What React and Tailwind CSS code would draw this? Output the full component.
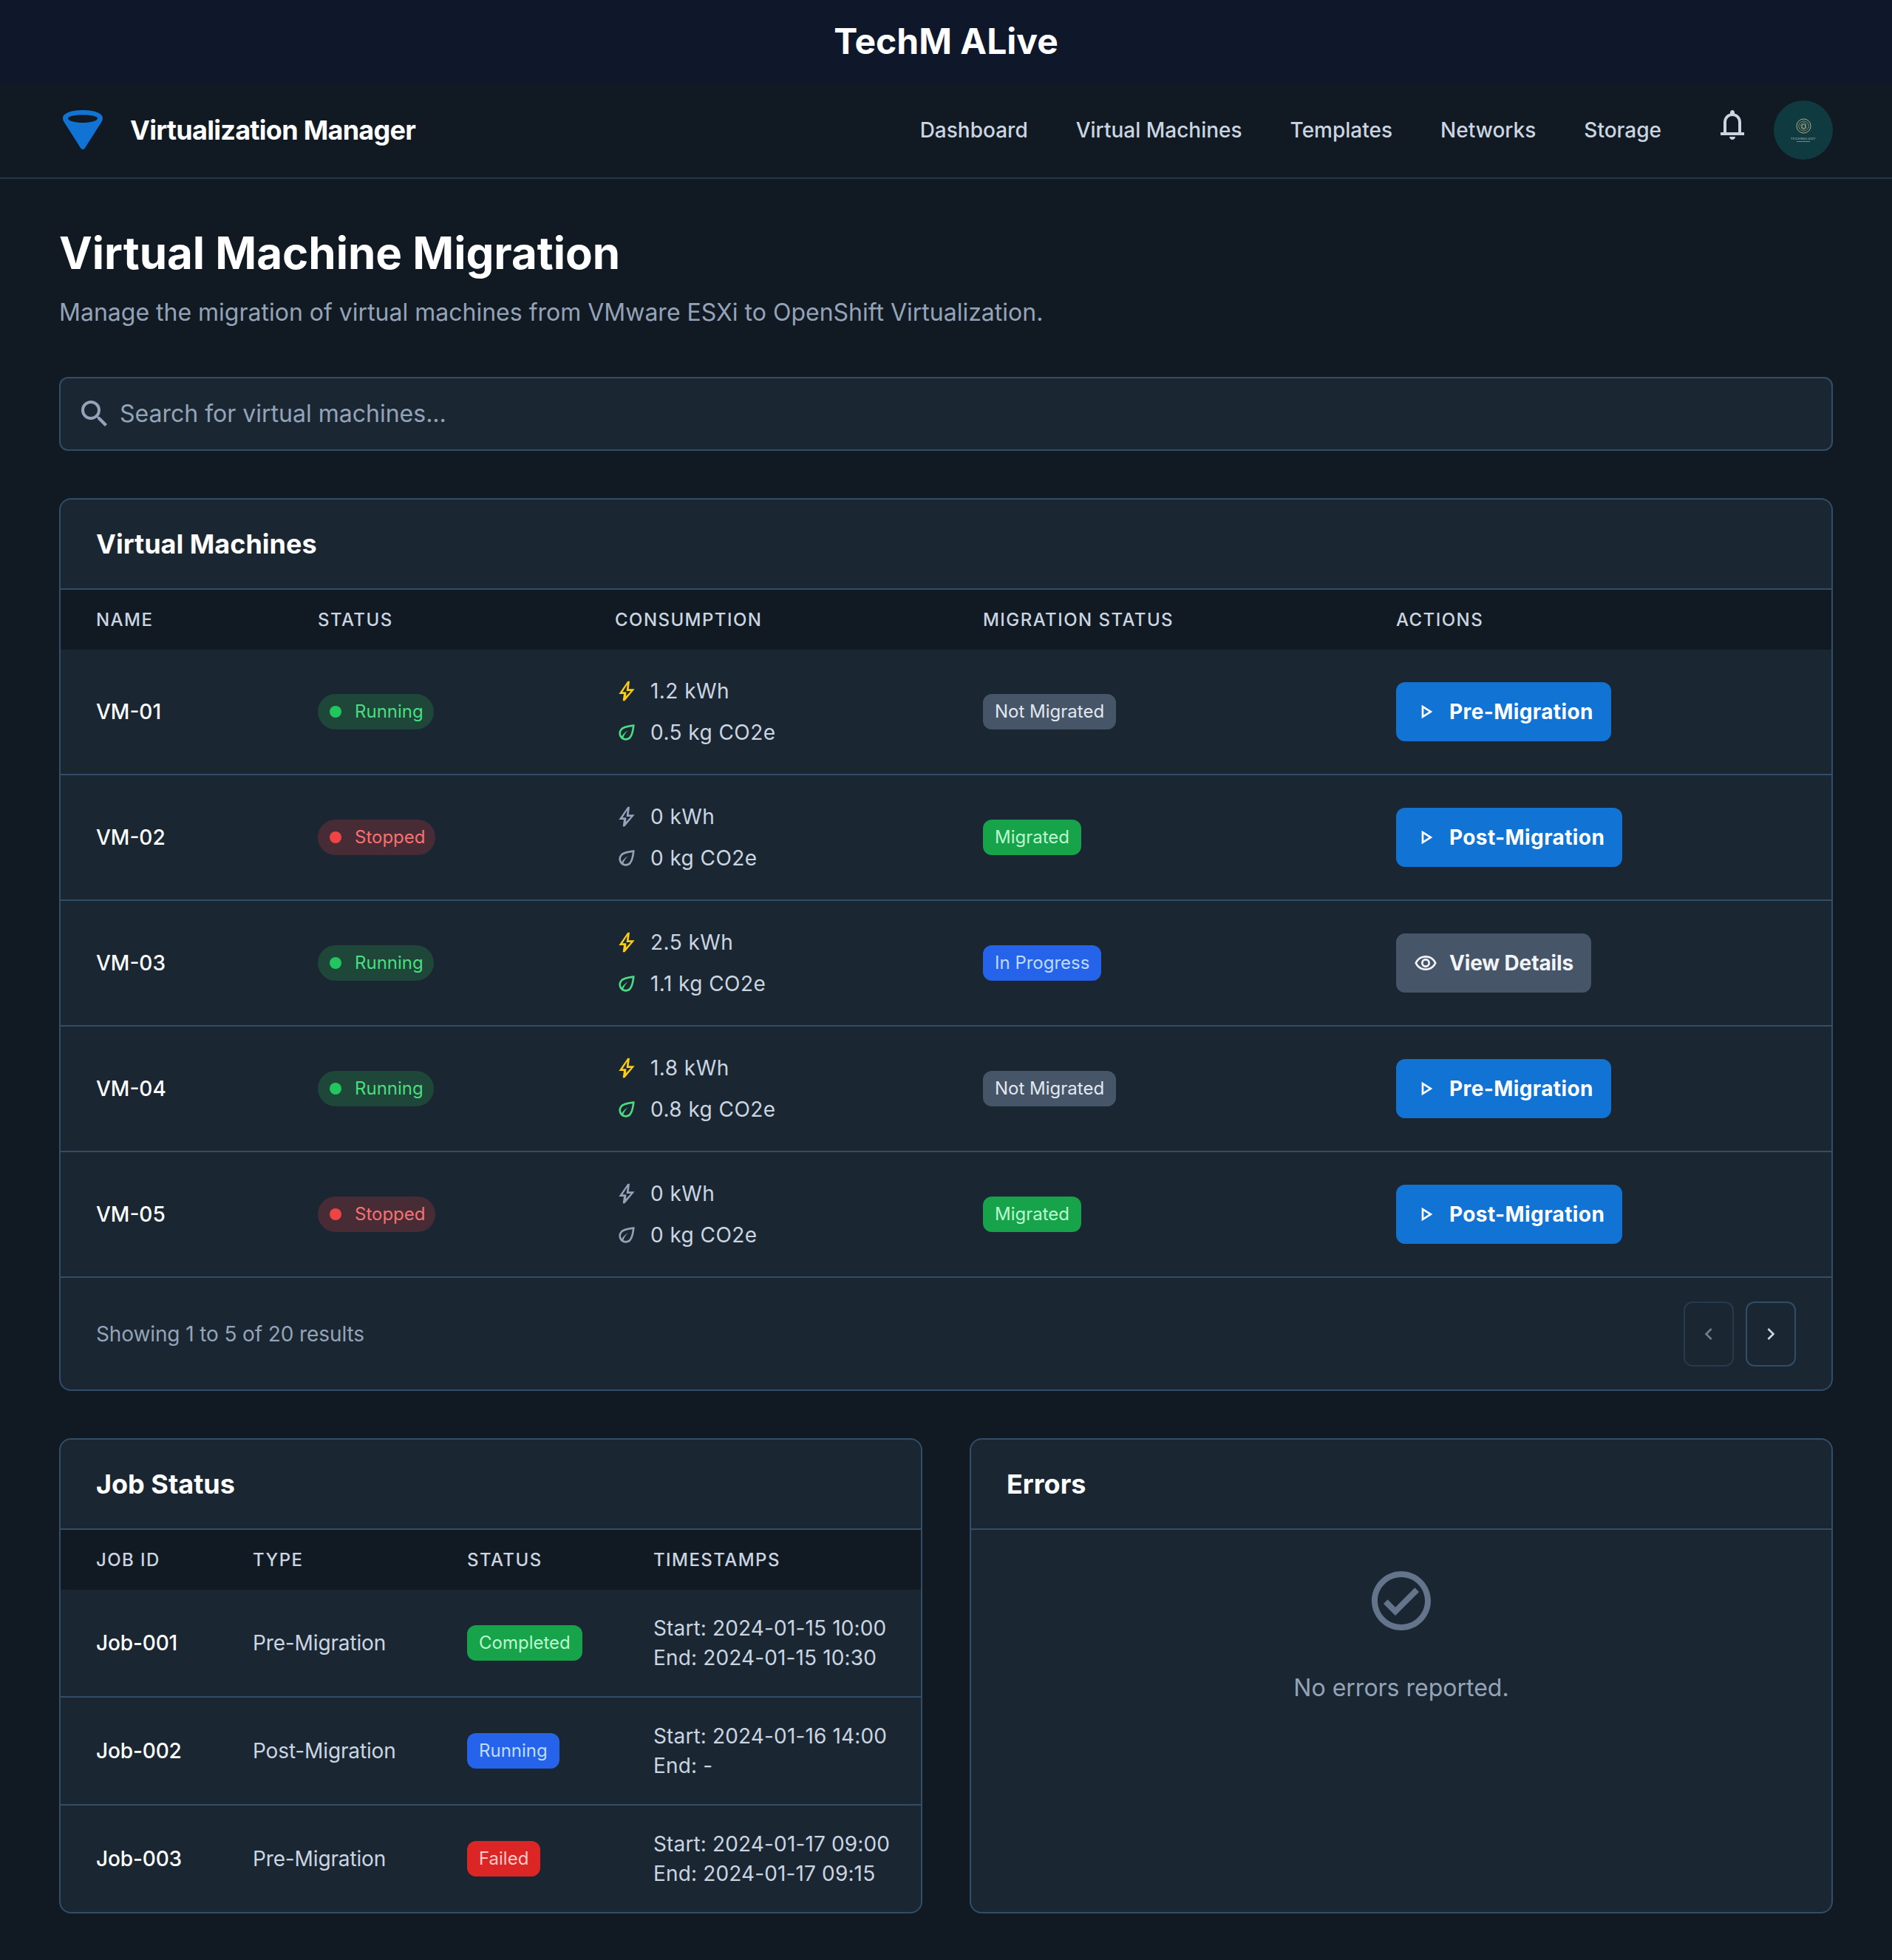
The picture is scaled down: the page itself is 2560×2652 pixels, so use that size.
import React from "react";
import { MdSearch, MdOutlinePlayArrow, MdOutlineRemoveRedEye, MdOutlineEco, MdOutlineCheckCircle, MdChevronLeft, MdChevronRight } from "react-icons/md";

const vms = [
  { n: "VM-01", s: "Running", k: "1.2 kWh", c: "0.5 kg CO2e", m: "Not Migrated", a: "Pre-Migration" },
  { n: "VM-02", s: "Stopped", k: "0 kWh", c: "0 kg CO2e", m: "Migrated", a: "Post-Migration" },
  { n: "VM-03", s: "Running", k: "2.5 kWh", c: "1.1 kg CO2e", m: "In Progress", a: "View Details" },
  { n: "VM-04", s: "Running", k: "1.8 kWh", c: "0.8 kg CO2e", m: "Not Migrated", a: "Pre-Migration" },
  { n: "VM-05", s: "Stopped", k: "0 kWh", c: "0 kg CO2e", m: "Migrated", a: "Post-Migration" },
];

const jobs = [
  { id: "Job-001", t: "Pre-Migration", s: "Completed", a: "Start: 2024-01-15 10:00", b: "End: 2024-01-15 10:30" },
  { id: "Job-002", t: "Post-Migration", s: "Running", a: "Start: 2024-01-16 14:00", b: "End: -" },
  { id: "Job-003", t: "Pre-Migration", s: "Failed", a: "Start: 2024-01-17 09:00", b: "End: 2024-01-17 09:15" },
];

const tag = {
  "Not Migrated": "bg-[#475569] text-[#e2e8f0]",
  Migrated: "bg-[#16a34a] text-[#bbf7d0]",
  "In Progress": "bg-[#2563eb] text-[#bfdbfe]",
  Completed: "bg-[#16a34a] text-[#bbf7d0]",
  Running: "bg-[#2563eb] text-[#bfdbfe]",
  Failed: "bg-[#dc2626] text-[#fecaca]",
};

function Tag({ v }) {
  return <span className={`inline-flex items-center h-12 px-4 rounded-xl text-[24px] font-normal ${tag[v]}`}>{v}</span>;
}

function Status({ v }) {
  const run = v === "Running";
  return (
    <span className={`inline-flex items-center h-12 pl-4 pr-3.5 gap-[18px] rounded-full text-[24px] font-normal ${run ? "bg-[#1e4639] text-[#4ade80]" : "bg-[#472c36] text-[#f87171]"}`}>
      <span className={`w-4 h-4 rounded-full ${run ? "bg-[#22c55e]" : "bg-[#ef4444]"}`} />
      {v}
    </span>
  );
}

function Action({ v }) {
  const view = v === "View Details";
  return (
    <button className={`inline-flex items-center h-20 px-6 gap-4 rounded-xl text-[28px] font-bold ${view ? "bg-[#475569] text-[#f1f5f9] tracking-[-0.005em]" : "bg-[#1173d4] text-white tracking-[0.014em]"}`}>
      {view ? <MdOutlineRemoveRedEye className="w-8 h-8" /> : <MdOutlinePlayArrow className="w-8 h-8" />}
      {v}
    </button>
  );
}

function Bell() {
  return (
    <svg viewBox="0 0 24 24" fill="#cbd5e1" className="ml-[72px] w-12 h-12 -mt-3.5 shrink-0">
      <path d="M4 19v-2h2v-7q0-2.075 1.25-3.687T10.5 4.2v-.7q0-.625.438-1.062T12 2q.625 0 1.063.438T13.500 3.500v.7q2 .5 3.250 2.113T18 10v7h2v2H4Zm8 3q-.825 0-1.413-.588T10 20h4q0 .825-.588 1.413T12 22Zm-4-5h8v-7q0-1.650-1.175-2.825T12 6q-1.650 0-2.825 1.175T8 10v7Z" />
    </svg>
  );
}

function Bolt({ className }) {
  return (
    <svg viewBox="0 0 24 24" fill="currentColor" className={className}>
      <path fillRule="evenodd" d="M8 22l1-7H4l9-13h2l-1 8h6L10 22H8z M11.300 17.300 16.200 12h-4.500l.8-6.500L7.800 13h3.700l-.2 4.300z" />
    </svg>
  );
}

function Logo() {
  return (
    <svg viewBox="0 0 54 54" className="w-[54px] h-[54px] shrink-0">
      <path fillRule="evenodd" fill="#1173d4" d="M27 0C13 0 0 3.500 0 11 C0 12.500 .5 13.800 1.200 15.200 L24.200 51.500 C25.500 53.500 28.500 53.500 29.800 51.500 L52.800 15.200 C53.500 13.800 54 12.500 54 11 C54 3.500 41 0 27 0 Z M27 6.500 C38 6.500 47 8.500 47 11 C47 14.500 38 17 27 17 C16 17 7 14.500 7 11 C7 8.500 16 6.500 27 6.500 Z" />
    </svg>
  );
}

function Avatar() {
  return (
    <div className="w-20 h-20 rounded-full bg-[#0f3a40] ml-8 flex flex-col items-center justify-center shrink-0">
      <svg viewBox="0 0 22 22" className="w-[21px] h-[21px]" fill="none" stroke="#b9b48f" strokeWidth="1">
        <circle cx="11" cy="11" r="10" />
        <circle cx="11" cy="11" r="7" strokeOpacity=".7" />
        <path d="M7 9l4-3 3 2v6l-3 2-3-2z M9 9h4v5H9z" strokeWidth=".8" />
      </svg>
      <span className="text-[4px] leading-[5px] mt-[4px] text-[#c8cfc8] tracking-[0.15em]">TECHNOLOGY</span>
      <span className="w-[18px] h-px mt-[1px] bg-[#6f8a88]" />
    </div>
  );
}

const Card = ({ title, children, className = "" }) => (
  <section className={`bg-[#1a2733] border-2 border-[#314d68] rounded-2xl overflow-hidden ${className}`}>
    <h2 className="h-[120px] flex items-center px-12 text-[36px] font-bold text-white">{title}</h2>
    {children}
  </section>
);

const vmCols = "grid grid-cols-[300px_402px_498px_559px_1fr] px-12";
const jobCols = "grid grid-cols-[212px_290px_252px_1fr] px-12";
const Th = ({ children }) => <div className="text-[24px] font-medium tracking-[0.06em] text-[#cbd5e1] uppercase">{children}</div>;

export default function App() {
  return (
    <div className="h-[2652px] overflow-hidden bg-[#111a22] font-['Inter','Liberation_Sans',sans-serif] text-white">
      <div className="h-[112px] bg-[#0f172a] flex items-center justify-center text-[48px] font-bold">TechM ALive</div>
      <header className="h-[130px] border-b-2 border-[#233648] pl-[85px] pr-20 flex items-center">
        <Logo />
        <div className="ml-[37px] text-[36px] font-bold tracking-[-0.02em] flex-1">Virtualization Manager</div>
        <nav className="flex items-center gap-[65px] text-[28px] font-medium text-[#cbd5e1]">
          <a>Dashboard</a><a>Virtual Machines</a><a>Templates</a><a>Networks</a><a>Storage</a>
        </nav>
        <Bell />
        <Avatar />
      </header>
      <main className="px-20 pt-[64px]">
        <h1 className="text-[60px] leading-[72px] font-bold">Virtual Machine Migration</h1>
        <p className="mt-[21px] text-[32px] leading-[48px] text-[#94a3b8]">Manage the migration of virtual machines from VMware ESXi to OpenShift Virtualization.</p>

        <div className="mt-[63px] h-[100px] bg-[#1a2733] border-2 border-[#314d68] rounded-xl flex items-center pl-[22px] gap-2.5">
          <MdSearch className="w-12 h-12 text-[#94a3b8]" />
          <span className="text-[32px] text-[#94a3b8]">Search for virtual machines...</span>
        </div>

        <Card title="Virtual Machines" className="mt-[64px]">
          <div className={`${vmCols} h-[83px] items-center bg-[#111a22] border-t-2 border-[#314d68]`}>
            <Th>Name</Th><Th>Status</Th><Th>Consumption</Th><Th>Migration Status</Th><Th>Actions</Th>
          </div>
          {vms.map((r) => {
            const off = r.s === "Stopped";
            return (
              <div key={r.n} className={`${vmCols} h-[170px] items-center border-b-2 border-[#314d68]`}>
                <div className="text-[28px] font-medium">{r.n}</div>
                <div><Status v={r.s} /></div>
                <div className="flex flex-col gap-3 text-[28px] tracking-[0.016em] text-[#cbd5e1]">
                  <div className="flex items-center gap-4 h-[44px]">
                    <Bolt className={`w-8 h-8 ${off ? "text-[#94a3b8]" : "text-[#facc15]"}`} />{r.k}
                  </div>
                  <div className="flex items-center gap-4 h-[44px]">
                    <MdOutlineEco className={`w-8 h-8 ${off ? "text-[#94a3b8]" : "text-[#4ade80]"}`} />{r.c}
                  </div>
                </div>
                <div><Tag v={r.m} /></div>
                <div><Action v={r.a} /></div>
              </div>
            );
          })}
          <div className="h-[151px] px-12 flex items-center justify-between">
            <span className="text-[28px] tracking-[-0.004em] text-[#94a3b8]">Showing 1 to 5 of 20 results</span>
            <div className="flex gap-4">
              <button className="w-[68px] h-[88px] rounded-xl border-2 border-[#314d68] opacity-50 flex items-center justify-center text-[#cbd5e1]"><MdChevronLeft className="w-8 h-8" /></button>
              <button className="w-[68px] h-[88px] rounded-xl border-2 border-[#314d68] flex items-center justify-center text-[#cbd5e1]"><MdChevronRight className="w-8 h-8" /></button>
            </div>
          </div>
        </Card>

        <div className="mt-[64px] grid grid-cols-2 gap-16">
          <Card title="Job Status">
            <div className={`${jobCols} h-[83px] items-center bg-[#111a22] border-t-2 border-[#314d68]`}>
              <Th>Job ID</Th><Th>Type</Th><Th>Status</Th><Th>Timestamps</Th>
            </div>
            {jobs.map((j, i) => (
              <div key={j.id} className={`${jobCols} ${i < 2 ? "h-[146px] border-b-2 border-[#314d68]" : "h-[144px]"} items-center`}>
                <div className="text-[28px] font-medium tracking-[-0.005em]">{j.id}</div>
                <div className="text-[28px] tracking-[-0.005em] text-[#cbd5e1]">{j.t}</div>
                <div><Tag v={j.s} /></div>
                <div className="text-[28px] leading-[40px] tracking-[0.005em] whitespace-nowrap text-[#cbd5e1]"><div>{j.a}</div><div>{j.b}</div></div>
              </div>
            ))}
          </Card>
          <Card title="Errors">
            <div className="border-t-2 border-[#314d68] pt-12 flex flex-col items-center">
              <MdOutlineCheckCircle className="w-24 h-24 text-[#64748b]" />
              <p className="mt-[46px] text-[32px] text-[#94a3b8]">No errors reported.</p>
            </div>
          </Card>
        </div>
      </main>
    </div>
  );
}
